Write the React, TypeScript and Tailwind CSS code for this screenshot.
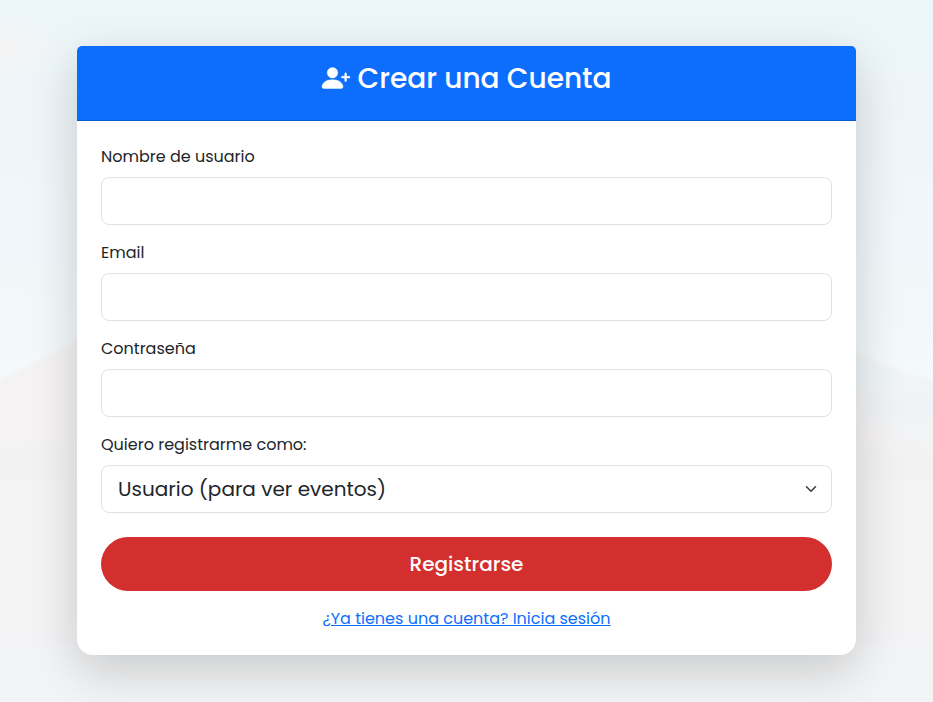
import React from "react";

function Backdrop() {
  return (
    <svg className="absolute inset-0 h-full w-full" viewBox="0 0 933 702" preserveAspectRatio="none" aria-hidden="true">
      <defs>
        <linearGradient id="sky" x1="0" y1="0" x2="0" y2="1">
          <stop offset="0" stopColor="#ecf5f8" />
          <stop offset="0.3" stopColor="#f0f6f9" />
          <stop offset="0.55" stopColor="#f4fafb" />
        </linearGradient>
        <linearGradient id="slope" x1="0" y1="0" x2="0" y2="1">
          <stop offset="0" stopColor="#f4f2f2" />
          <stop offset="1" stopColor="#f3f4f5" />
        </linearGradient>
        <linearGradient id="ridge" x1="0" y1="0" x2="0" y2="1">
          <stop offset="0" stopColor="#eff4f6" />
          <stop offset="1" stopColor="#f2f3f4" />
        </linearGradient>
        <radialGradient id="cloud">
          <stop offset="0" stopColor="#f6f4f4" />
          <stop offset="1" stopColor="#f6f4f4" stopOpacity="0" />
        </radialGradient>
        <filter id="soft" x="-20%" y="-20%" width="140%" height="140%">
          <feGaussianBlur stdDeviation="2" />
        </filter>
      </defs>
      <rect width="933" height="702" fill="url(#sky)" />
      <ellipse cx="4" cy="48" rx="60" ry="34" fill="url(#cloud)" />
      <path d="M-20 390L0 380L77 340L200 290H740L856 352L905 373L953 388V722H-20Z" fill="url(#slope)" filter="url(#soft)" />
      <path d="M850 352L905 374L950 388V460L905 440L850 410Z" fill="url(#ridge)" filter="url(#soft)" />
    </svg>
  );
}

function PersonPlus() {
  return (
    <svg className="-mt-0.5 mr-2 h-7 w-7 shrink-0 overflow-visible" viewBox="0 0 16 16" fill="currentColor" stroke="currentColor" strokeWidth="0.25" aria-hidden="true">
      <path d="M1 14s-1 0-1-1 1-4 6-4 6 3 6 4-1 1-1 1zm5-6a3 3 0 1 0 0-6 3 3 0 0 0 0 6" />
      <path fillRule="evenodd" d="M13.5 5a.5.5 0 0 1 .5.5V7h1.5a.5.5 0 0 1 0 1H14v1.5a.5.5 0 0 1-1 0V8h-1.5a.5.5 0 0 1 0-1H13V5.5a.5.5 0 0 1 .5-.5" />
    </svg>
  );
}

function Field({ id, label, type }: { id: string; label: string; type: string }) {
  return (
    <div className="mb-4">
      <label htmlFor={id} className="mb-2 block h-6 leading-6">{label}</label>
      <input id={id} type={type} className="block h-12 w-full rounded-lg border border-[#dee2e6] bg-white px-4 text-xl outline-none" />
    </div>
  );
}

export default function App() {
  return (
    <div className="relative h-[702px] w-full overflow-hidden bg-[#f1f4f6] pt-[46px] font-[Poppins,sans-serif] text-base text-[#212529]">
      <Backdrop />
      <main className="relative mx-auto h-[609px] w-[779px] rounded-t-[6px] rounded-b-2xl bg-white shadow-[0_16px_48px_rgba(0,0,0,0.175)]">
        <header className="flex h-[75px] justify-center rounded-t-[5px] border-b border-[#0b5bd3] bg-[#0d6efd] pt-4 text-white">
          <h1 className="flex h-[34px] items-center text-[28px] leading-[34px] font-medium whitespace-nowrap">
            <PersonPlus />
            Crear una Cuenta
          </h1>
        </header>
        <form className="p-6" onSubmit={(event) => event.preventDefault()}>
          <Field id="username" label="Nombre de usuario" type="text" />
          <Field id="email" label="Email" type="email" />
          <Field id="password" label="Contraseña" type="password" />
          <div className="mb-6">
            <label htmlFor="role" className="mb-2 block h-6 leading-6">Quiero registrarme como:</label>
            <button id="role" type="button" className="flex h-12 w-full items-center justify-between rounded-lg border border-[#dee2e6] bg-white pr-3.5 pl-4 text-xl">
              Usuario (para ver eventos)
              <svg className="h-3 w-3" viewBox="0 0 16 16" fill="none" stroke="#343a40" strokeWidth="2" strokeLinecap="round" strokeLinejoin="round" aria-hidden="true">
                <path d="m2 5 6 6 6-6" />
              </svg>
            </button>
          </div>
          <button type="submit" className="block h-[54px] w-full rounded-full bg-[#d32f2f] text-xl font-medium text-white">
            Registrarse
          </button>
          <div className="mt-4 text-center leading-6">
            <a href="#login" className="text-[#0d6efd] underline">¿Ya tienes una cuenta? Inicia sesión</a>
          </div>
        </form>
      </main>
    </div>
  );
}
